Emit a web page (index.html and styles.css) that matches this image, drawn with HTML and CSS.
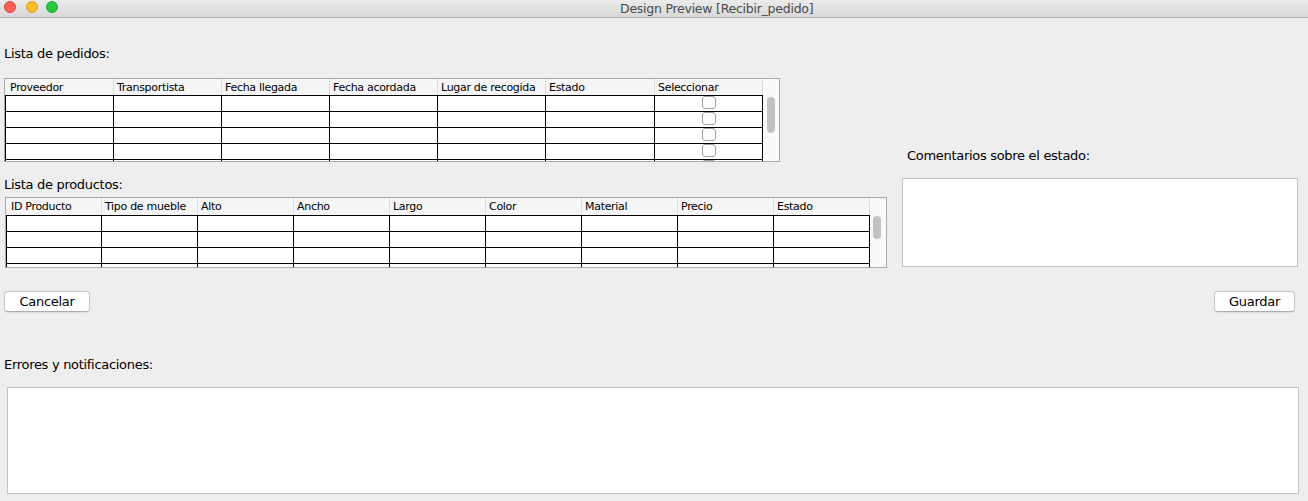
FILE: index.html
```html
<!DOCTYPE html>
<html lang="es">
<head>
<meta charset="utf-8">
<title>Design Preview [Recibir_pedido]</title>
<link rel="stylesheet" href="styles.css">
</head>
<body>
<div class="window">
  <div class="titlebar">
    <div class="lights">
      <span class="light red"></span>
      <span class="light yellow"></span>
      <span class="light green"></span>
    </div>
    <div class="title">Design Preview [Recibir_pedido]</div>
  </div>

  <div class="content">
    <div class="top">
      <div class="leftcol">
        <div class="label label-pedidos">Lista de pedidos:</div>
        <div class="pane pane-pedidos">
          <div class="table">
            <div class="row head cols-pedidos">
              <div class="hc">Proveedor</div>
              <div class="hc">Transportista</div>
              <div class="hc">Fecha llegada</div>
              <div class="hc">Fecha acordada</div>
              <div class="hc">Lugar de recogida</div>
              <div class="hc">Estado</div>
              <div class="hc">Seleccionar</div>
            </div>
            <div class="body">
              <div class="row cols-pedidos"><div class="c"></div><div class="c"></div><div class="c"></div><div class="c"></div><div class="c"></div><div class="c"></div><div class="c chk"><span class="box"></span></div></div>
              <div class="row cols-pedidos"><div class="c"></div><div class="c"></div><div class="c"></div><div class="c"></div><div class="c"></div><div class="c"></div><div class="c chk"><span class="box"></span></div></div>
              <div class="row cols-pedidos"><div class="c"></div><div class="c"></div><div class="c"></div><div class="c"></div><div class="c"></div><div class="c"></div><div class="c chk"><span class="box"></span></div></div>
              <div class="row cols-pedidos"><div class="c"></div><div class="c"></div><div class="c"></div><div class="c"></div><div class="c"></div><div class="c"></div><div class="c chk"><span class="box"></span></div></div>
              <div class="row cols-pedidos"><div class="c"></div><div class="c"></div><div class="c"></div><div class="c"></div><div class="c"></div><div class="c"></div><div class="c chk"><span class="box"></span></div></div>
            </div>
          </div>
          <div class="track"><div class="thumb thumb-pedidos"></div></div>
        </div>

        <div class="label label-productos">Lista de productos:</div>
        <div class="pane pane-productos">
          <div class="table">
            <div class="row head head-tall cols-productos">
              <div class="hc">ID Producto</div>
              <div class="hc">Tipo de mueble</div>
              <div class="hc">Alto</div>
              <div class="hc">Ancho</div>
              <div class="hc">Largo</div>
              <div class="hc">Color</div>
              <div class="hc">Material</div>
              <div class="hc">Precio</div>
              <div class="hc">Estado</div>
            </div>
            <div class="body">
              <div class="row cols-productos"><div class="c"></div><div class="c"></div><div class="c"></div><div class="c"></div><div class="c"></div><div class="c"></div><div class="c"></div><div class="c"></div><div class="c"></div></div>
              <div class="row cols-productos"><div class="c"></div><div class="c"></div><div class="c"></div><div class="c"></div><div class="c"></div><div class="c"></div><div class="c"></div><div class="c"></div><div class="c"></div></div>
              <div class="row cols-productos"><div class="c"></div><div class="c"></div><div class="c"></div><div class="c"></div><div class="c"></div><div class="c"></div><div class="c"></div><div class="c"></div><div class="c"></div></div>
              <div class="row cols-productos"><div class="c"></div><div class="c"></div><div class="c"></div><div class="c"></div><div class="c"></div><div class="c"></div><div class="c"></div><div class="c"></div><div class="c"></div></div>
            </div>
          </div>
          <div class="track"><div class="thumb thumb-productos"></div></div>
        </div>
      </div>

      <div class="rightcol">
        <div class="label label-coment">Comentarios sobre el estado:</div>
        <div class="textbox textbox-coment"></div>
      </div>
    </div>

    <div class="buttons">
      <button class="btn btn-cancel" type="button">Cancelar</button>
      <button class="btn btn-save" type="button">Guardar</button>
    </div>

    <div class="label label-errores">Errores y notificaciones:</div>
    <div class="textbox textbox-errores"></div>
  </div>
</div>
</body>
</html>
```

FILE: styles.css
```css
* { box-sizing: border-box; }

html, body {
  margin: 0;
  padding: 0;
}

body {
  width: 1308px;
  height: 501px;
  overflow: hidden;
  background: #eeeeee;
  font-family: "DejaVu Sans", "Noto Sans", sans-serif;
  color: #000;
}

.window {
  width: 1308px;
  height: 501px;
}

/* ---------- title bar ---------- */
.titlebar {
  height: 18px;
  display: flex;
  align-items: center;
  background: linear-gradient(#ebebeb, #d8d8d8);
  border-bottom: 1px solid #b3b3b3;
}

.lights {
  display: flex;
  gap: 8px;
  padding-left: 4px;
  width: 620px;
  align-self: flex-start;
  padding-top: 1px;
}

.light {
  width: 12px;
  height: 12px;
  border-radius: 50%;
  display: block;
}
.light.red { background: #fc5f57; border: 0.5px solid #df4640; }
.light.yellow { background: #fdbb2e; border: 0.5px solid #dd9f22; margin-left: 2px; }
.light.green { background: #29c840; border: 0.5px solid #1ea932; }

.title {
  font-size: 12.5px;
  letter-spacing: -0.25px;
  color: #4b4b4b;
  line-height: 17px;
}

/* ---------- content ---------- */
.content {
  display: flex;
  flex-direction: column;
}

.top {
  display: flex;
}

.leftcol {
  width: 902px;
  padding-left: 4px;
  display: flex;
  flex-direction: column;
  align-items: flex-start;
}

.rightcol {
  width: 396px;
  display: flex;
  flex-direction: column;
}

.label {
  font-size: 13px;
  letter-spacing: -0.3px;
  line-height: 16px;
  height: 16px;
}

.label-pedidos { margin-top: 28px; padding-left: 0; }
.label-productos { margin-top: 15px; }
.label-coment { margin-top: 130px; padding-left: 5px; }
.label-errores { margin-top: 45px; padding-left: 4px; }

/* ---------- tables ---------- */
.pane {
  display: flex;
  background: #fff;
  border: 1px solid #a9a9a9;
  overflow: hidden;
}

.pane-pedidos {
  width: 776px;
  height: 84px;
  margin-top: 16px;
}

.pane-productos {
  width: 882px;
  height: 71px;
  margin-top: 4px;
  margin-left: 1px;
}

.table {
  display: flex;
  flex-direction: column;
}

.row {
  display: grid;
  border-right: 1px solid #000;
}

.cols-pedidos {
  grid-template-columns: 108px 108px 108px 108px 108px 109px 108px;
}

.cols-productos {
  grid-template-columns: 95px 96px 96px 96px 96px 96px 96px 96px 96px;
}

.row.head {
  height: 16px;
  background: #f5f5f5;
  border-right: 1px solid #dcdcdc;
}

.row.head-tall { height: 17px; }

.hc {
  border-left: 1px solid #dcdcdc;
  font-size: 11px;
  letter-spacing: -0.3px;
  line-height: 17px;
  padding-left: 3px;
  white-space: nowrap;
  overflow: hidden;
}
.head-tall .hc { line-height: 18px; }

.hc:first-child { border-left-color: transparent; padding-left: 4px; }

.body .row {
  height: 16px;
  border-top: 1px solid #000;
}

.c {
  border-left: 1px solid #000;
}

.chk {
  display: flex;
  justify-content: center;
  align-items: flex-start;
}

.box {
  display: block;
  width: 14px;
  height: 13px;
  border: 1px solid #a3a3a3;
  border-radius: 3px;
  background: #fff;
  margin-left: 1px;
}

.track {
  width: 16px;
  background: #fafafa;
  flex: none;
}

.thumb {
  width: 8px;
  margin-left: 4px;
  border-radius: 4px;
  background: #c2c2c2;
}
.thumb-pedidos { margin-top: 18px; height: 36px; }
.thumb-productos { margin-top: 18px; height: 23px; margin-left: 3px; }

/* ---------- text boxes ---------- */
.textbox {
  background: #fff;
  border: 1px solid #c3c3c3;
}

.textbox-coment {
  margin-top: 14px;
  width: 396px;
  height: 89px;
}

.textbox-errores {
  margin-top: 14px;
  margin-left: 7px;
  width: 1292px;
  height: 107px;
}

/* ---------- buttons ---------- */
.buttons {
  display: flex;
  justify-content: space-between;
  margin-top: 23px;
  padding-left: 4px;
  padding-right: 13px;
}

.btn {
  height: 21px;
  background: #fff;
  border: 1px solid #c6c6c6;
  border-bottom-color: #acacac;
  border-radius: 4px;
  font-family: "DejaVu Sans", "Noto Sans", sans-serif;
  font-size: 13px;
  letter-spacing: -0.3px;
  color: #000;
  padding: 0;
  line-height: 19px;
  box-shadow: 0 0.5px 1px rgba(0,0,0,0.08);
}

.btn-cancel { width: 86px; }
.btn-save { width: 81px; }
```
